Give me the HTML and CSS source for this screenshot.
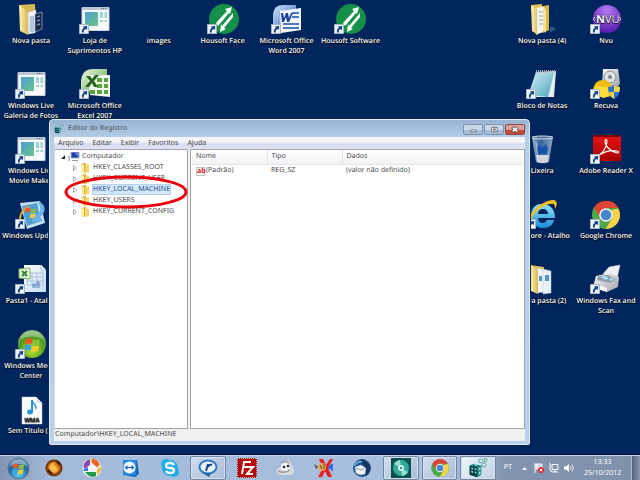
FILE: index.html
```html
<!DOCTYPE html>
<html lang="pt">
<head>
<meta charset="utf-8">
<title>Editor do Registro</title>
<link rel="stylesheet" href="styles.css">
</head>
<body>
<svg class="defs" aria-hidden="true">
  <defs>
    <linearGradient id="gFolder" x1="0" x2="1"><stop offset="0" stop-color="#fdf3b8"/><stop offset="1" stop-color="#dcb850"/></linearGradient>
    <linearGradient id="gTeal" x1="0" y1="0" x2="1" y2="1"><stop offset="0" stop-color="#4f9fd0"/><stop offset="1" stop-color="#68c48c"/></linearGradient>
    <linearGradient id="gBlue" x1="0" y1="0" x2="1" y2="1"><stop offset="0" stop-color="#cfe3fa"/><stop offset="1" stop-color="#2b5fc0"/></linearGradient>
    <linearGradient id="gGreen" x1="0" y1="0" x2="1" y2="1"><stop offset="0" stop-color="#f0f8ea"/><stop offset="1" stop-color="#4ea02f"/></linearGradient>
    <linearGradient id="gRed" x1="0" y1="0" x2="0" y2="1"><stop offset="0" stop-color="#e81414"/><stop offset="1" stop-color="#a80000"/></linearGradient>
    <linearGradient id="gNote" x1="0" y1="0" x2="1" y2="1"><stop offset="0" stop-color="#d8f2f6"/><stop offset="1" stop-color="#4aa5ba"/></linearGradient>
    <linearGradient id="gGlass" x1="0" x2="1"><stop offset="0" stop-color="#b9cfe4"/><stop offset=".4" stop-color="#3e6da8"/><stop offset="1" stop-color="#a5bdd6"/></linearGradient>
    <linearGradient id="gPaper" x1="0" y1="0" x2="1" y2="1"><stop offset="0" stop-color="#fff"/><stop offset="1" stop-color="#c2dcf4"/></linearGradient>
    <linearGradient id="gMetal" x1="0" y1="0" x2="1" y2="1"><stop offset="0" stop-color="#fafafa"/><stop offset="1" stop-color="#9da3aa"/></linearGradient>
    <radialGradient id="gPurple" cx=".5" cy=".2" r=".8"><stop offset="0" stop-color="#b47cf0"/><stop offset="1" stop-color="#5a18ae"/></radialGradient>
    <radialGradient id="gOrb" cx=".5" cy=".8" r=".8"><stop offset="0" stop-color="#5fd0f0"/><stop offset=".6" stop-color="#256a9e"/><stop offset="1" stop-color="#7995b0"/></radialGradient>
    <radialGradient id="gMedia" cx=".5" cy=".7" r=".7"><stop offset="0" stop-color="#c5e830"/><stop offset=".65" stop-color="#4c9a20"/><stop offset="1" stop-color="#87b47a"/></radialGradient>
    <radialGradient id="gFire"><stop offset="0" stop-color="#ffd75a"/><stop offset=".55" stop-color="#d66a10"/><stop offset="1" stop-color="#5a2408"/></radialGradient>
    <linearGradient id="gIe" x1="0" y1="0" x2="0" y2="1"><stop offset="0" stop-color="#8fe6fb"/><stop offset="1" stop-color="#1b8ed8"/></linearGradient>

    <symbol id="arrow" viewBox="0 0 10 10"><path d="M.5.5h9v9h-9z" fill="#eef3f8" stroke="#a9b6c4"/><path d="M3 8.500C2.500 6 3.500 4.500 5 4L4 2.500 8.200 2 7.800 6.200 6.600 5C5 5.500 4.500 6.500 4.800 8.500z" fill="#123f8c"/></symbol>
    <symbol id="flag" viewBox="0 0 16 16"><path d="M2 3q3-2 6 0L7 8Q4 6 1 8z" fill="#f0562b"/><path d="M9 3.500q3 1 6-.5l-1 5q-3 1.500-6 0z" fill="#86c440"/><path d="M1 9q3-2 6 0l-1 5q-3-2-6 0z" fill="#3ba4e0"/><path d="M8 9.500q3 1 6-.5l-1 5q-3 1.500-6 0z" fill="#fbc830"/></symbol>
    <symbol id="folder" viewBox="0 0 32 32"><path d="M4 1l16-1 1 26-9 4z" fill="#d9b654"/><path d="M13 8l8-2v22l-8 2z" fill="#f4f6fa" stroke="#aab" stroke-width=".5"/><path d="M4 1l9 6v24l-8-4z" fill="url(#gFolder)"/></symbol>
    <symbol id="folderDark" viewBox="0 0 32 32"><use href="#folder"/><path d="M14 13l6-2v18l-6 1z" fill="#dbe6f2"/><path d="M16 12v16M18 12v16" stroke="#8ba4c6"/><path d="M20 10l7-2v17l-7 3z" fill="#17243f" stroke="#a8b5c6" stroke-width=".7"/><path d="M22 13l3-1m-3 5l3-1m-3 5l3-1" stroke="#5b93cf" stroke-width="1.500"/></symbol>
    <symbol id="folderFull" viewBox="0 0 32 32"><path d="M5 1l11-1 1 27-7 4z" fill="#e3c156"/><path d="M5 1l7 5v25l-6-4z" fill="url(#gFolder)"/><path d="M11 4l7-2v26l-7 2z" fill="#f2f4f4"/><path d="M13 8h4m-4 4h4m-4 4h4m-4 4h4" stroke="#7ba6cd"/><path d="M17 2l6-1v25l-6 3z" fill="#d9b650"/><path d="M17 2l3 4v23l-3-3z" fill="#f8e38e"/><path d="M25 22l5 3-7 4z" fill="#6e88aa" opacity=".5"/></symbol>
    <symbol id="app" viewBox="0 0 32 32"><path d="M3 3.500h27v23H3z" fill="#f6f8fa" stroke="#cbd2da"/><path d="M3 3h27v3H3z" fill="#bac7d4"/><path d="M22 4.500h6" stroke="#566" stroke-dasharray="1 1"/><path d="M6 8h13v14H6z" fill="url(#gTeal)"/><path d="M21 8h3v6h-3zM25.500 8H28v6h-2.500zM21 16h3v2h-3zM25.500 16H28v2h-2.500z" fill="#9ed3d0"/></symbol>
    <symbol id="excel" viewBox="0 0 32 32"><path d="M2 27V12Q3 0 14 0h14v12z" fill="url(#gGreen)"/><path d="M9 6h22v22l-20-2z" fill="#f2f7ef"/><path d="M18 9h5v4h-5zM25 9h4v4h-4zM18 15h5v4h-5zM25 15h4v4h-4zM18 21h5v4h-5zM25 21h4v4h-4zM11 21h5v4h-5z" fill="#5aa33c"/><path d="M7 7h4l2 3 3-4h4l-5 6 4 6h-4l-2-4-3 4H6l5-6z" fill="#226420"/></symbol>
    <symbol id="word" viewBox="0 0 32 32"><path d="M2 27V10Q3 1 12 1h13v22z" fill="url(#gBlue)"/><path d="M9 7l21-3v22l-20 3z" fill="#f4f8fd"/><path d="M21 9h7M21 13h7M12 20h16M12 24h16" stroke="#4778c6" stroke-width="2"/><path d="M10 9h2l1 5 2-5h2l1 5 2-5h2l-4 9h-2l-1-5-2 5h-2z" fill="#1b439c"/></symbol>
    <symbol id="housoft" viewBox="0 0 32 32"><circle cx="17" cy="15" r="15" fill="#149048"/><path d="M9 19L20 7l-2-2 7-2-2 7-1-1-11 13zM13 28l1-8 1 2L26 9v4L17 24l2 1z" fill="#fff"/></symbol>
    <symbol id="nvu" viewBox="0 0 32 32"><circle cx="17" cy="15" r="14" fill="url(#gPurple)"/><path d="M5 13l-2 2 2 2M29 13l2 2-2 2" fill="none" stroke="#d8c2f8"/><text x="6" y="19" class="nvu-text"><tspan class="heavy">N</tspan>VU</text></symbol>
    <symbol id="notepad" viewBox="0 0 32 32"><path d="M10 3l20-1-2 26H6z" fill="#e6edf0"/><path d="M10 3l18 1-6 24-20-2z" fill="url(#gNote)"/><path d="M10 2.500h19" stroke="#a9afb4" stroke-width="3" stroke-dasharray="1 1"/></symbol>
    <symbol id="recuva" viewBox="0 0 32 32"><path d="M13 0h15l2 14-2 4H12z" fill="url(#gMetal)"/><circle cx="20" cy="8" r="6" fill="#dfe2e6" stroke="#888d94"/><circle cx="20" cy="8" r="2" fill="#7e858e"/><path d="M3 20q2-9 10-9t9 8l1 5-19 3z" fill="#f0bd14"/><path d="M6 17l16 2-1 8-8 2-10-5z" fill="#ffdb38"/><path d="M18 18q4 0 6-2 2 2 6 2 0 9-6 12-6-3-6-12z" fill="#2d74d2"/><path d="M24 16q2 2 6 2 0 3-1 5h-5zM24 23v7q-4-2-5-7z" fill="#f8d448"/></symbol>
    <symbol id="bin" viewBox="0 0 32 32"><path d="M6 3h21l-4 25q-6 3-13 0z" fill="url(#gGlass)" opacity=".85"/><ellipse cx="16.500" cy="3.500" rx="10.500" ry="1.500" fill="#52739e" stroke="#d5e0ea"/><path d="M11 14l3-3 2 3 4-4 2 5-2 6-4-2-4 2z" fill="#1652a8"/><path d="M10 21h13l-1 7q-6 2-11 0z" fill="#cfd6de"/><path d="M10 8l2 16" stroke="#e4eef8" opacity=".6"/></symbol>
    <symbol id="reader" viewBox="0 0 32 32"><path d="M3 1h28v26H3z" fill="url(#gRed)"/><path d="M3 1h28v2H3z" fill="#79080a"/><path d="M9 21c5-3 8-9 8-14 0-2-2-2-2 0 0 5 6 11 12 12 2 0 2-2 0-2-6-1-13 1-18 4z" fill="none" stroke="#fff" stroke-width="1.200"/></symbol>
    <symbol id="ie" viewBox="0 0 32 32"><path d="M16 5C8 5 5 11 5 17s4 12 12 12c6 0 10-3 11-8h-7c-1 2-2 3-4 3-3 0-5-2-5-5h17c0-9-5-14-13-14zm-4 10c0-3 2-5 5-5s5 2 5 5z" fill="url(#gIe)"/><path d="M2 25C1 15 17 0 28 1c4 1 3 6 1 9 0-4-1-6-4-5C17 5 6 14 4 25z" fill="#f4bd24"/></symbol>
    <symbol id="chrome" viewBox="0 0 32 32"><circle cx="16" cy="16" r="14" fill="#4da84a"/><path d="M4 9a14 14 0 0 1 24.500 0H16l-5.500 10z" fill="#dd4535"/><path d="M28.300 9.500A14 14 0 0 1 15.500 30l7-11-1-8z" fill="#fdd247"/><circle cx="16" cy="16" r="6.800" fill="#f4f4f4"/><circle cx="16" cy="16" r="5.300" fill="#4687cf"/></symbol>
    <symbol id="papers" viewBox="0 0 32 32"><path d="M4 1l14 2v25H7z" fill="#dfbd5b"/><path d="M11 4l7 2v22l-7 1z" fill="#f5f7fa" stroke="#b9c1cc" stroke-width=".5"/><path d="M17 5l8 2v22l-8 1z" fill="#e9f1fa" stroke="#b9c1cc" stroke-width=".5"/><path d="M13 12h3v5h-3zM19 11h4v6h-4z" fill="#5295c7"/><path d="M4 1l8 5v24l-7-3z" fill="url(#gFolder)"/></symbol>
    <symbol id="fax" viewBox="0 0 32 32"><path d="M13 10l6-7 11-2-3 14z" fill="#eef2f5" stroke="#c3c9cf" stroke-width=".5"/><path d="M6 12l13-3 10 4-1 10-11 5-14-5z" fill="url(#gMetal)"/><path d="M8 12l10-1 8 5-6 3-13-3z" fill="#8f9daa"/><path d="M10 13l5-1 4 2-3 2zM19 15l3-1 2 2-3 1z" fill="#a7ddf5"/><path d="M5 20l12 4v4L4 24z" fill="#f8f9fa"/></symbol>
    <symbol id="update" viewBox="0 0 32 32"><path d="M5 4l20-2 5 22-18 6z" fill="#c5e0f0"/><path d="M7 7l15-3 4 18-14 5z" fill="#519ed2"/><path d="M22 2c9 2 10 11 3 16l3 4-11 1 2-10 3 3c5-4 4-9 0-14z" fill="#67b4e5"/><path d="M8 27C2 20 6 11 14 8" fill="none" stroke="#e1a838" stroke-width="2"/><use href="#flag" x="9" y="7" width="13" height="13"/></symbol>
    <symbol id="sheet" viewBox="0 0 32 32"><path d="M9 1h17l5 5v22H9z" fill="url(#gPaper)"/><path d="M26 1v5h5" fill="#fff" stroke="#aac5de"/><path d="M12 9h16v12H12zM12 13h16M12 17h16M17 9v12M22 9v12" fill="none" stroke="#a8c3de"/><path d="M18 24v-4h2v4M22 24v-6h2v6" stroke="#587fb7" fill="none"/><path d="M4 5l11-1v11L4 14z" fill="#e9f5e1" stroke="#77b45d"/><path d="M7 7l5 5m0-5l-5 5" stroke="#328b2a" stroke-width="2"/></symbol>
    <symbol id="media" viewBox="0 0 32 32"><circle cx="17" cy="15" r="14" fill="url(#gMedia)"/><path d="M5 10a13 13 0 0 1 24 0q-12-5-24 0z" fill="#fff" opacity=".3"/><use href="#flag" x="9" y="7" width="17" height="17"/></symbol>
    <symbol id="wma" viewBox="0 0 32 32"><path d="M7 3h14l6 6v21H7z" fill="#fcfdfe" stroke="#d0d5dc" stroke-width=".5"/><path d="M21 3v6h6" fill="#dce5ec"/><path d="M17 6v12" stroke="#2b95d8" stroke-width="2"/><ellipse cx="15" cy="18" rx="3" ry="2.500" fill="#2b95d8"/><path d="M17 6c0 4 5 4 4 9" fill="none" stroke="#2b95d8" stroke-width="1.500"/><text x="17" y="28" text-anchor="middle" class="wma-text">WMA</text></symbol>
    <symbol id="regedit" viewBox="0 0 24 24"><path d="M2 9l5-2 9 2v11l-5 3-9-3z" fill="#1f8587"/><path d="M2 9l9 2v12l-9-3z" fill="#073f43"/><path d="M4 11l2 1v2l-2-1zM8 12l2 1v2l-2-1zM4 15l2 1v2l-2-1zM8 16l2 1v2l-2-1zM13 12l2-1v3l-2 1zM13 17l2-1v3l-2 1zM7 8l3-1 3 1-3 1z" fill="#9ae3de"/><path d="M13 2l3-1 2 2-2 3-3-1zM19 1l3-1 1 3-3 2zM17 7l3-1 2 2-2 3-3-1z" fill="#d4f1f0" stroke="#17696c" stroke-width=".7"/></symbol>
    <symbol id="miniFolder" viewBox="0 0 10 10"><path d="M1 1l5-1 1 9-4 1z" fill="#d5a93a"/><path d="M1 1l3 1v8l-3-1z" fill="#fff2a6"/><path d="M5 1l4 1v7l-4 1z" fill="#f2d568"/></symbol>
  </defs>
</svg>

<main class="desktop">
  <a href="#" class="icon c1 r1"><svg class="pic"><use href="#folderDark"/></svg><span>Nova pasta</span></a>
  <a href="#" class="icon c2 r1"><svg class="pic"><use href="#app"/></svg><svg class="link"><use href="#arrow"/></svg><span>Loja de<br>Suprimentos HP</span></a>
  <a href="#" class="icon c3 r1"><i class="pic"></i><span>images</span></a>
  <a href="#" class="icon c4 r1"><svg class="pic"><use href="#housoft"/></svg><svg class="link"><use href="#arrow"/></svg><span>Housoft Face</span></a>
  <a href="#" class="icon c5 r1"><svg class="pic"><use href="#word"/></svg><svg class="link"><use href="#arrow"/></svg><span>Microsoft Office<br>Word 2007</span></a>
  <a href="#" class="icon c6 r1"><svg class="pic"><use href="#housoft"/></svg><svg class="link"><use href="#arrow"/></svg><span>Housoft Software</span></a>
  <a href="#" class="icon c9 r1"><svg class="pic"><use href="#folderFull"/></svg><span>Nova pasta (4)</span></a>
  <a href="#" class="icon c10 r1"><svg class="pic"><use href="#nvu"/></svg><svg class="link"><use href="#arrow"/></svg><span>Nvu</span></a>
  <a href="#" class="icon c1 r2"><svg class="pic"><use href="#app"/></svg><svg class="link"><use href="#arrow"/></svg><span>Windows Live<br>Galeria de Fotos</span></a>
  <a href="#" class="icon c2 r2"><svg class="pic"><use href="#excel"/></svg><svg class="link"><use href="#arrow"/></svg><span>Microsoft Office<br>Excel 2007</span></a>
  <a href="#" class="icon c9 r2"><svg class="pic"><use href="#notepad"/></svg><svg class="link"><use href="#arrow"/></svg><span>Bloco de Notas</span></a>
  <a href="#" class="icon c10 r2"><svg class="pic"><use href="#recuva"/></svg><svg class="link"><use href="#arrow"/></svg><span>Recuva</span></a>
  <a href="#" class="icon c1 r3"><svg class="pic"><use href="#app"/></svg><svg class="link"><use href="#arrow"/></svg><span>Windows Live<br>Movie Maker</span></a>
  <a href="#" class="icon c9 r3"><svg class="pic"><use href="#bin"/></svg><span>Lixeira</span></a>
  <a href="#" class="icon c10 r3"><svg class="pic"><use href="#reader"/></svg><svg class="link"><use href="#arrow"/></svg><span>Adobe Reader X</span></a>
  <a href="#" class="icon c1 r4"><svg class="pic"><use href="#update"/></svg><svg class="link"><use href="#arrow"/></svg><span>Windows Update</span></a>
  <a href="#" class="icon c9 r4"><svg class="pic"><use href="#ie"/></svg><svg class="link"><use href="#arrow"/></svg><span>iexplore - Atalho</span></a>
  <a href="#" class="icon c10 r4"><svg class="pic"><use href="#chrome"/></svg><svg class="link"><use href="#arrow"/></svg><span>Google Chrome</span></a>
  <a href="#" class="icon c1 r5"><svg class="pic"><use href="#sheet"/></svg><svg class="link"><use href="#arrow"/></svg><span>Pasta1 - Atalho</span></a>
  <a href="#" class="icon c9 r5"><svg class="pic"><use href="#papers"/></svg><span>Nova pasta (2)</span></a>
  <a href="#" class="icon c10 r5"><svg class="pic"><use href="#fax"/></svg><svg class="link"><use href="#arrow"/></svg><span>Windows Fax and<br>Scan</span></a>
  <a href="#" class="icon c1 r6"><svg class="pic"><use href="#media"/></svg><svg class="link"><use href="#arrow"/></svg><span>Windows Media<br>Center</span></a>
  <a href="#" class="icon c1 r7"><svg class="pic"><use href="#wma"/></svg><span>Sem Título (2)</span></a>

  <section class="window" aria-label="Editor do Registro">
    <header class="titlebar">
      <svg class="app-icon"><use href="#regedit"/></svg>
      <h1>Editor do Registro</h1>
      <div class="controls">
        <button aria-label="Minimizar"><svg viewBox="0 0 18 10"><path d="M6.500 5.500h6v2h-6z" fill="#fff" stroke="#6b7480"/></svg></button>
        <button aria-label="Maximizar"><svg viewBox="0 0 18 10"><path d="M6.500 2.500h6v5h-6z" fill="#fff" stroke="#5d6671"/><path d="M8 4h3v2H8z" fill="#5d6671"/></svg></button>
        <button class="close" aria-label="Fechar"><svg viewBox="0 0 18 10"><path d="M6 2.500l6 5m0-5l-6 5" stroke="#614a50" stroke-width="3.500"/><path d="M6.500 3l5 4m0-4l-5 4" stroke="#fff" stroke-width="2"/></svg></button>
      </div>
    </header>
    <div class="client">
      <nav class="menubar"><button>Arquivo</button><button>Editar</button><button>Exibir</button><button>Favoritos</button><button>Ajuda</button></nav>
      <div class="panes">
        <div class="tree">
          <div class="root"><svg class="twist" viewBox="0 0 6 6"><path d="M5 1v4H1z" fill="#222"/></svg><svg class="computer" viewBox="0 0 12 10"><path d="M0 4h2v5H0z" fill="#b5bfca"/><path d="M3 0h8v6H3z" fill="#1e3fb0" stroke="#aab6c6"/><path d="M7 1l3 3V1z" fill="#79a7ee"/><path d="M4 8h6v1H4z" fill="#93a0ae"/></svg>Computador</div>
          <ul>
            <li><svg class="twist" viewBox="0 0 6 6"><path d="M1.500.5l3 2.500-3 2.500z" fill="#fff" stroke="#aaa"/></svg><svg class="mini"><use href="#miniFolder"/></svg><span>HKEY_CLASSES_ROOT</span></li>
            <li><svg class="twist" viewBox="0 0 6 6"><path d="M1.500.5l3 2.500-3 2.500z" fill="#fff" stroke="#aaa"/></svg><svg class="mini"><use href="#miniFolder"/></svg><span>HKEY_CURRENT_USER</span></li>
            <li class="selected"><svg class="twist" viewBox="0 0 6 6"><path d="M1.500.5l3 2.500-3 2.500z" fill="#fff" stroke="#aaa"/></svg><svg class="mini"><use href="#miniFolder"/></svg><span>HKEY_LOCAL_MACHINE</span><svg class="ring" viewBox="0 0 124 36"><ellipse cx="62" cy="18" rx="60" ry="15" fill="none" stroke="#e9020c" stroke-width="3"/></svg></li>
            <li><svg class="twist" viewBox="0 0 6 6"><path d="M1.500.5l3 2.500-3 2.500z" fill="#fff" stroke="#aaa"/></svg><svg class="mini"><use href="#miniFolder"/></svg><span>HKEY_USERS</span></li>
            <li><svg class="twist" viewBox="0 0 6 6"><path d="M1.500.5l3 2.500-3 2.500z" fill="#fff" stroke="#aaa"/></svg><svg class="mini"><use href="#miniFolder"/></svg><span>HKEY_CURRENT_CONFIG</span></li>
          </ul>
        </div>
        <div class="list">
          <table>
            <thead><tr><th class="col">Nome</th><th class="col">Tipo</th><th>Dados</th></tr></thead>
            <tbody><tr><td><div class="value"><span class="ab">ab</span>(Padrão)</div></td><td>REG_SZ</td><td>(valor não definido)</td></tr></tbody>
          </table>
        </div>
      </div>
      <footer class="status">Computador\HKEY_LOCAL_MACHINE</footer>
    </div>
  </section>
</main>

<footer class="taskbar">
  <button class="start" aria-label="Iniciar"><svg viewBox="0 0 24 24"><circle cx="12" cy="12" r="11" fill="url(#gOrb)" stroke="#547497"/><path d="M3 9a9.500 9.500 0 0 1 18 0q-9-3-18 0z" fill="#fff" opacity=".35"/><use href="#flag" x="5" y="5" width="14" height="14"/></svg></button>
  <div class="tasks">
    <button aria-label="Navegador"><svg viewBox="0 0 20 20"><circle cx="10" cy="10" r="8.500" fill="url(#gFire)"/><path d="M5 7q3-4 7-2-3 1-2 4t5 1q-1 5-6 5-5-2-4-8z" fill="#ffcf58" opacity=".6"/><path d="M13 3l3 4m-12 5l4 4" stroke="#3b1808" stroke-width="2"/></svg></button>
    <button aria-label="Picasa"><svg viewBox="0 0 20 20"><circle cx="10" cy="10" r="9.500" fill="#f5f5f7"/><path d="M8 1v6l-6 4Q0 4 8 1z" fill="#8a42b4"/><path d="M9.500.5q6 0 8.500 6l-3 3-5.500-5z" fill="#f26722"/><path d="M19 8q1 5-4 9v-5z" fill="#fbb316"/><path d="M3 14h11v4q-6 3-11-4z" fill="#279c4b"/><path d="M1 12l5-3v4H2z" fill="#397ad0"/></svg></button>
    <button aria-label="TeamViewer"><svg viewBox="0 0 20 20"><path d="M3 2h13l2 14-4 3-11-2z" fill="#1468ba"/><path d="M2 2h13v15H2z" fill="#2389e6"/><circle cx="8.500" cy="9.500" r="6" fill="#f4f8fc"/><path d="M3.500 9.500L6.500 7v2h4V7l3 2.500-3 2.500v-2h-4v2z" fill="#1768bd"/></svg></button>
    <button aria-label="Skype"><svg viewBox="0 0 20 20"><circle cx="10" cy="10" r="8" fill="#20ace8"/><circle cx="6" cy="6" r="5" fill="#20ace8"/><circle cx="14" cy="14" r="5" fill="#20ace8"/><path d="M14 7q-1-2-4-2-4 0-4 2.500T10 10t4 2.500T10 15q-3 0-4-2" fill="none" stroke="#fff" stroke-width="2.300"/></svg></button>
    <button class="open" aria-label="Real"><svg viewBox="0 0 20 20"><ellipse cx="10" cy="9" rx="8.500" ry="6.500" fill="#e6f1fb" stroke="#357abf" stroke-width="2"/><path d="M3 14q5 2 10 1l-2 4z" fill="#2167ab"/><path d="M8 13l2-7m0 3q1-3 4-2" fill="none" stroke="#16457e" stroke-width="2"/></svg></button>
    <button aria-label="FileZilla"><svg viewBox="0 0 20 20"><path d="M1 1h18v18H1z" fill="#b50808" stroke="#b50808" stroke-width="2" stroke-dasharray="1 1"/><path d="M5 16L7 4h7M6 9h6m-1 0h5l-6 7h6" fill="none" stroke="#fff" stroke-width="2"/></svg></button>
    <button aria-label="Mascote"><svg viewBox="0 0 20 20"><path d="M1 14q1-5 5-5l1-5 7-2 4 7q3 7-2 8H5z" fill="#d7dadd"/><path d="M3 13q6 3 12-1M6 5q4-3 8 0" stroke="#9299a0" fill="none" stroke-width="1.500"/><circle cx="10" cy="9" r="4" fill="#f5f6f7"/><circle cx="9" cy="9" r="1.300" fill="#23292f"/><circle cx="13" cy="8" r="1.300" fill="#23292f"/></svg></button>
    <button aria-label="X4"><svg viewBox="0 0 20 20"><path d="M5 1h4l3 6 4-6h3l-5 9 4 9h-4l-3-6-3 6H4l5-9z" fill="#ea1c1c"/><path d="M0 6l5 3-3 2z" fill="#516274"/><circle cx="8" cy="9" r="4" fill="#e9ac56"/><path d="M6 7l2 4m2-5v5" stroke="#5c3b22"/><path d="M18 6v7m0-3h-3l3-4" fill="none" stroke="#265ce0" stroke-width="1.500"/></svg></button>
    <button aria-label="Thunderbird"><svg viewBox="0 0 20 20"><circle cx="10" cy="10" r="9" fill="#255a96"/><path d="M4 4q7-6 13 2 3 8-3 12 1-8-4-12z" fill="#123763"/><path d="M3 9l6-2 5 3-1 6q-6 2-9-1z" fill="#eff1f3"/><path d="M4 10l5 2 4-2" fill="none" stroke="#919ca8"/><path d="M2 8q3-5 8-4" fill="none" stroke="#65a6d8" stroke-width="2"/></svg></button>
    <button class="open" aria-label="Disco"><svg viewBox="0 0 20 20"><path d="M0 0h20v20H0z" fill="#0c4f50"/><circle cx="10" cy="10" r="8" fill="#30a997"/><path d="M10 10L3 6a8 8 0 0 1 6-4zM10 10l7 4a8 8 0 0 1-6 4z" fill="#93ded0"/><circle cx="10" cy="10" r="3" fill="#d0f4ec"/><circle cx="10" cy="10" r="1" fill="#136258"/></svg></button>
    <button class="open" aria-label="Google Chrome"><svg><use href="#chrome"/></svg></button>
    <button class="open active" aria-label="Editor do Registro"><svg><use href="#regedit"/></svg></button>
  </div>
  <div class="tray">
    <span>PT</span>
    <svg viewBox="0 0 10 10"><path d="M3 7l2.500-3L8 7z" fill="#fff"/></svg>
    <svg viewBox="0 0 10 10"><path d="M1 0v10M2 1h6v5H2z" fill="#d6dde6" stroke="#fff"/><circle cx="7" cy="7" r="3" fill="#dd2b31"/><path d="M5.700 5.700l2.600 2.600m0-2.600L5.700 8.300" stroke="#fff"/></svg>
    <svg viewBox="0 0 10 10"><path d="M3 1.500h6v5H3zM4 9h5M6 7v2M1 0v6q0 3 3 3" fill="none" stroke="#fff"/></svg>
    <svg viewBox="0 0 10 10"><path d="M0 3.500h2L5 1v8L2 6.500H0z" fill="#fff"/><path d="M6.500 3q1.500 2 0 4M8 1.500q3 3.500 0 7" fill="none" stroke="#fff" stroke-width=".8"/></svg>
    <div class="clock">13:33<br>25/10/2012</div>
    <button class="peek" aria-label="Mostrar área de trabalho"></button>
  </div>
</footer>
</body>
</html>
```
FILE: styles.css
```css
* { box-sizing: border-box; }

body {
  margin: 0;
  height: 100vh;
  display: flex;
  flex-direction: column;
  background: #00265d;
  font: 7px/10px "Noto Sans", "Open Sans", sans-serif;
  text-rendering: geometricPrecision;
  color: #4c4c4c;
  overflow: hidden;
}

button {
  margin: 0;
  padding: 0;
  border: 0;
  background: none;
  font: inherit;
  color: inherit;
}

svg { display: block; }
.defs { position: absolute; width: 0; height: 0; }
.heavy { font-weight: 700; }
.nvu-text { font: 11px "Open Sans", sans-serif; fill: #fff; }
.wma-text { font: 600 6px "Open Sans", sans-serif; fill: #333; }

/* Desktop */
.desktop {
  position: relative;
  flex: 1;
  min-height: 0;
  display: grid;
  grid-template-columns: repeat(10, 1fr);
  grid-auto-rows: 65px;
  padding: 4px 2px 0 0;
  margin-left: -1px;
}
.icon {
  position: relative;
  display: flex;
  flex-direction: column;
  align-items: center;
  gap: 1px;
  min-width: 0;
  color: #fff;
  text-decoration: none;
  text-align: center;
  white-space: nowrap;
  font-family: "Open Sans", sans-serif;
  font-weight: 600;
  text-shadow: 0 1px 1px #000, 0 0 1px #000;
}
.pic { width: 32px; height: 32px; flex: none; }
.link {
  position: absolute;
  top: 20px;
  left: calc(50% - 16px);
  width: 10px;
  height: 10px;
}
.c1 { grid-column: 1; }
.c2 { grid-column: 2; }
.c3 { grid-column: 3; }
.c4 { grid-column: 4; }
.c5 { grid-column: 5; }
.c6 { grid-column: 6; }
.c9 { grid-column: 9; }
.c10 { grid-column: 10; }
.r1 { grid-row: 1; }
.r2 { grid-row: 2; }
.r3 { grid-row: 3; }
.r4 { grid-row: 4; }
.r5 { grid-row: 5; }
.r6 { grid-row: 6; }
.r7 { grid-row: 7; }

/* Registry window */
.window {
  position: absolute;
  top: 119px;
  left: 50px;
  width: 75%;
  height: 326px;
  display: flex;
  flex-direction: column;
  padding: 0 4px 3px;
  border: 1px solid #dcebf8;
  border-radius: 4px 4px 2px 2px;
  background: linear-gradient(#98b4d3, #b4cee8 18px, #b9d1ea);
  box-shadow: 0 0 0 1px #10254a;
}
.titlebar { display: flex; align-items: center; height: 17px; gap: 4px; }
.app-icon { width: 10px; height: 10px; }
.titlebar h1 { flex: 1; margin: 0; font: inherit; }
.controls { display: flex; gap: 1px; align-self: flex-start; padding-top: 4px; }
.controls button {
  width: 20px;
  height: 11px;
  border: 1px solid #7e93ac;
  border-radius: 2px;
  background: linear-gradient(#cbd9e8 50%, #a5bcd5 50%);
}
.controls svg { width: 100%; height: 100%; }
.controls .close { border-color: #94484a; background: linear-gradient(#dda095 50%, #c54b35 50%); }
.client { flex: 1; display: flex; flex-direction: column; background: #f0f0f0; }
.menubar {
  display: flex;
  align-items: center;
  gap: 9px;
  height: 12px;
  padding-left: 4px;
  background: linear-gradient(#f3f5fb 40%, #d6dcee 60%, #dfe5f4);
}
.panes { flex: 1; display: flex; gap: 2px; background: #f0f0f0; }
.tree {
  width: 134px;
  padding-top: 1px;
  border: 1px solid #a0a3a8;
  border-left-color: #d8d8d8;
  background: #fff;
  line-height: 11px;
}
.root, .tree li { display: flex; align-items: center; height: 11px; white-space: nowrap; }
.root { padding-left: 5px; gap: 2px; }
.twist { width: 6px; height: 6px; flex: none; }
.computer { width: 12px; height: 10px; }
.tree ul { list-style: none; margin: 0; padding: 0 0 0 17px; }
.tree li { gap: 2px; }
.mini { width: 10px; height: 10px; flex: none; }
.tree li span { padding: 0 1px; }
.tree .selected { position: relative; }
.selected span { background: #d5e8fb; outline: 1px solid #b3d1f0; outline-offset: -1px; color: #24508c; }
.ring { position: absolute; left: -8px; top: -10px; width: 124px; height: 36px; }
.list { flex: 1; border: 1px solid #a0a3a8; background: #fff; padding: 0 1px; }
table { width: 100%; border-collapse: collapse; table-layout: fixed; }
th, td { height: 14px; padding: 0 4px; text-align: left; font-weight: 400; white-space: nowrap; }
th { background: linear-gradient(#fff, #f1f2f4); border-bottom: 1px solid #e2e4e7; }
.col { width: 75px; border-right: 1px solid #e0e3e6; }
.value { display: flex; align-items: center; gap: 1px; }
.ab {
  width: 9px;
  height: 9px;
  border: 1px solid #c5c5c5;
  background: #fff;
  color: #d81818;
  line-height: 7px;
  font-weight: 700;
}
.status { height: 12px; padding-left: 1px; line-height: 12px; background: #f0f0f0; }

/* Taskbar */
.taskbar {
  position: relative;
  display: flex;
  flex: none;
  height: 25px;
  border-top: 1px solid #c5d5e8;
  box-shadow: 0 -1px 0 #001038;
  background: linear-gradient(90deg, #8296b3, #a3bad8 8%, #a8c0de 70%, #8294ae 79%, #8091aa);
}
.start { width: 36px; display: grid; place-items: center; }
.start svg { width: 23px; height: 23px; }
.tasks { flex: 1; display: flex; gap: 3px; }
.tasks button { flex: 1; display: grid; place-items: center; border: 1px solid transparent; border-radius: 2px; }
.tasks svg { width: 20px; height: 20px; }
.tasks .open { border-color: #7387a3; background: linear-gradient(135deg, #d0deee, #aabdd6); box-shadow: inset 0 0 0 1px #d3e0ef; }
.tasks .active { background: linear-gradient(135deg, #f0f6fb, #c0d2e5); }
.tray {
  display: flex;
  align-items: center;
  justify-content: flex-end;
  gap: 5px;
  width: 144px;
  color: #fff;
}
.tray > svg { width: 10px; height: 10px; }
.clock { flex: 1; text-align: center; line-height: 11px; }
.tray > span { padding: 0 2px 0 8px; }
.peek { align-self: stretch; width: 9px; border-left: 1px solid #aab9cc; background: linear-gradient(90deg, #53647c, #8798b0); }
```
